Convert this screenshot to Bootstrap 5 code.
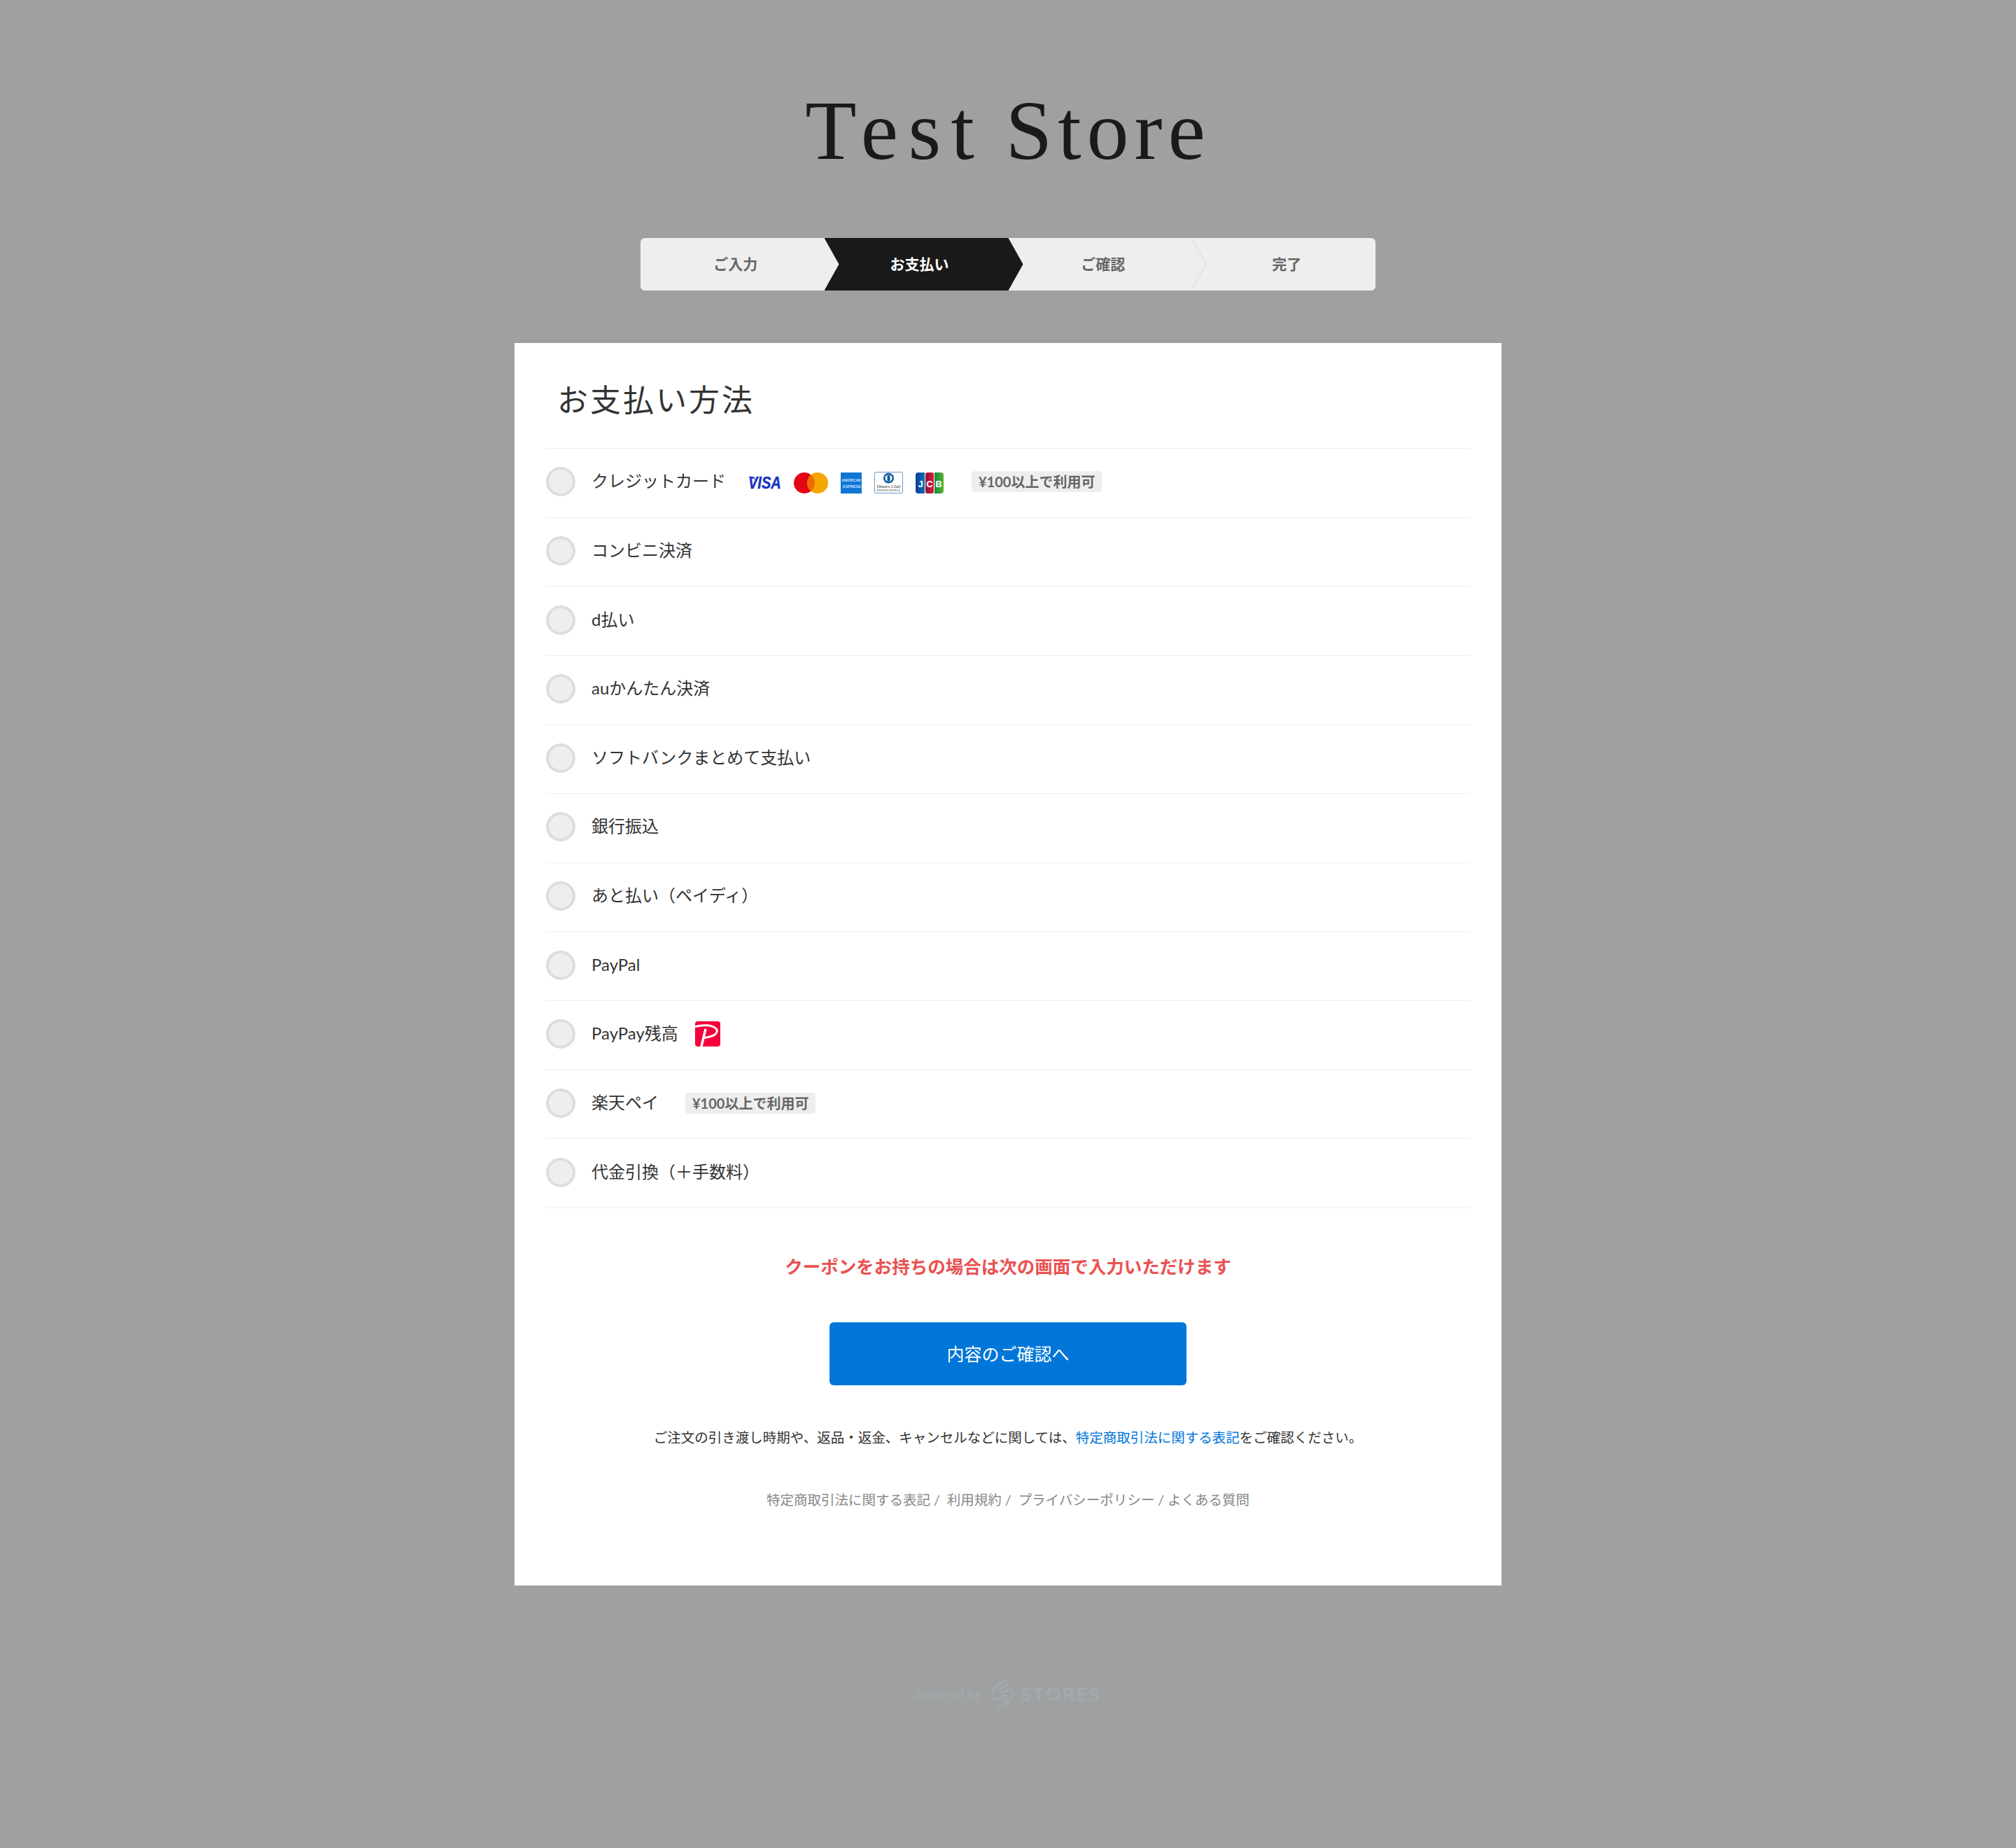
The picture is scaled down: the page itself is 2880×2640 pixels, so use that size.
<!DOCTYPE html>
<html lang="ja">
<head>
  <meta charset="UTF-8">
  <meta name="viewport" content="width=device-width, initial-scale=1.0">
  <title>Test Store</title>
  <link href="https://cdn.jsdelivr.net/npm/bootstrap@5.3.1/dist/css/bootstrap.min.css" rel="stylesheet">
  <style>
    body {
      background: #9fa1a0;
      font-family: Lato, "Noto Sans CJK JP", sans-serif;
      color: #333;
      min-height: 100vh;
    }
    .store-logo {
      font-family: "Liberation Serif", serif;
      font-size: 120px;
      line-height: 120px;
      letter-spacing: 8px;
      word-spacing: -8px;
      color: #1a1a1a;
      padding-top: 127px;
      height: 340px;
    }
    .logo-first { letter-spacing: 14.500px; }
    .step-bar {
      width: 1050px;
      height: 75px;
      background: #eee;
      border-radius: 6px;
      margin-bottom: 75px;
    }
    .step-item {
      width: 262.5px;
      flex: none;
      font-size: 21px;
      line-height: 30px;
      font-weight: 700;
      color: #666;
      padding: 0 0 2px 9px;
      position: relative;
    }
    .step-active {
      width: 284px;
      margin-right: -21.5px;
      padding-right: 21px;
      background: #191919;
      color: #fff;
      z-index: 1;
      clip-path: polygon(0 0, 263px 0, 100% 50%, 263px 100%, 0 100%, 21px 50%);
    }
    .step-sep {
      position: absolute;
      right: -21px;
      top: 0;
      width: 22px;
      height: 75px;
    }
    .pay-panel {
      width: 1410px;
      height: 1775px;
      background: #fff;
      padding: 0 45px;
    }
    .pay-title {
      font-size: 44px;
      line-height: 60px;
      letter-spacing: 3px;
      font-weight: 400;
      margin: 0;
      padding: 51px 0 39px 16px;
      color: #333;
      height: 150px;
    }
    .pay-list {
      --bs-list-group-border-color: #eee;
      --bs-list-group-border-radius: 0;
      border-top: 1px solid #eee;
    }
    .pay-row {
      height: 98.64px;
      padding: 0 0 3px;
      border-bottom: 1px solid #eee !important;
      font-size: 24px;
      line-height: 36px;
      color: #333;
    }
    .pay-radio.form-check-input {
      width: 42px;
      height: 42px;
      margin: 0 23px 0 0;
      background-color: #eee;
      border: 4px solid #ddd;
      flex: none;
    }
    .pay-name { position: relative; top: -1px; }
    .min-badge {
      background: #eee;
      color: #666;
      font-size: 20px;
      font-weight: 700;
      line-height: 30px;
      height: 30px;
      padding: 0 10px;
      border-radius: 4px;
    }
    .min-badge-near { margin-left: 38px; }
    .card-logos { margin-left: 32px; margin-right: 40px; gap: 18px; padding-top: 3px; }
    .card-logos svg { display: block; }
    .coupon-note {
      font-size: 25.5px;
      line-height: 36px;
      font-weight: 700;
      color: #e95252;
      margin: 65px 0 62px;
    }
    .next-btn {
      width: 510px;
      height: 90px;
      background: #0076d9;
      border: 0;
      border-radius: 6px;
      color: #fff;
      font-size: 25px;
      line-height: 88px;
      padding: 0;
    }
    .next-btn:hover { background: #0076d9; color: #fff; }
    .legal-note {
      font-size: 19.5px;
      line-height: 30px;
      color: #333;
      margin: 60px 0 59px;
    }
    .legal-note a { color: #0076d9; text-decoration: none; }
    .foot-links {
      font-size: 19.5px;
      line-height: 30px;
      color: #888;
    }
    .foot-links a { color: #888; text-decoration: none; }
    .powered-by {
      color: #a3a8b0;
      margin-top: 131px;
      height: 48px;
    }
    .powered-by small {
      font-size: 17px;
      letter-spacing: .6px;
      font-weight: 700;
      margin-right: 13px;
    }
    .stores-word {
      font-family: Lato, sans-serif;
      font-size: 27px;
      font-weight: 900;
      letter-spacing: 2.300px;
      margin-left: 9px;
    }
  </style>
</head>
<body>
  <div class="d-flex flex-column align-items-center">
    <div class="store-logo text-center"><span class="logo-first">Test</span> Store</div>

    <div class="step-bar d-flex">
      <div class="step-item d-flex align-items-center justify-content-center">ご入力</div>
      <div class="step-item step-active d-flex align-items-center justify-content-center">お支払い</div>
      <div class="step-item d-flex align-items-center justify-content-center">ご確認
        <svg class="step-sep" viewBox="0 0 22 75"><path d="M0 0 L21 37.5 L0 75" fill="none" stroke="#d8d8d8" stroke-width="1"/></svg>
      </div>
      <div class="step-item d-flex align-items-center justify-content-center">完了</div>
    </div>

    <div class="pay-panel">
      <h2 class="pay-title">お支払い方法</h2>
      <div class="list-group list-group-flush pay-list">
        <label class="list-group-item d-flex align-items-center pay-row">
          <input class="form-check-input pay-radio" type="radio" name="pay">
          <span class="pay-name">クレジットカード</span>
          <span class="d-flex align-items-center card-logos">
            <svg width="47" height="30" viewBox="0 0 47 30"><path d="M0 6h8l2 4z" fill="#1a34c4"/><text x="0" y="19.500" transform="scale(1 1.2)" font-family="Liberation Sans" font-size="20" font-weight="700" font-style="italic" fill="#1a34c4" stroke="#1a34c4" stroke-width=".4">VISA</text></svg>
            <svg width="49" height="30" viewBox="0 0 49 30"><circle cx="15" cy="15" r="15" fill="#e30613"/><circle cx="34" cy="15" r="15" fill="#f5a500"/><path d="M24.500 3.400a15 15 0 0 1 0 23.200a15 15 0 0 1 0-23.200z" fill="#ee6a00"/></svg>
            <svg width="30" height="30" viewBox="0 0 30 30"><rect width="30" height="30" fill="#0f76d6"/><text x="15" y="13" text-anchor="middle" font-family="Liberation Sans" font-size="5" font-weight="700" fill="#cfe4fa" textLength="27" lengthAdjust="spacingAndGlyphs">AMERICAN</text><text x="16" y="22" text-anchor="middle" font-family="Liberation Sans" font-size="5" font-weight="700" fill="#cfe4fa" textLength="26" lengthAdjust="spacingAndGlyphs">EXPRESS</text></svg>
            <svg width="41" height="31" viewBox="0 0 41 31"><rect x=".5" y=".5" width="40" height="30" rx="1.500" fill="#fff" stroke="#6f9bc9"/><circle cx="20.500" cy="9" r="7.500" fill="#0a5a9c"/><circle cx="20.500" cy="9" r="5" fill="#fff"/><rect x="18.500" y="4.500" width="4" height="9" fill="#0a5a9c"/><text x="20.500" y="23" text-anchor="middle" font-family="Liberation Serif" font-size="7" fill="#333" textLength="34" lengthAdjust="spacingAndGlyphs">Diners Club</text><text x="20.500" y="28" text-anchor="middle" font-family="Liberation Serif" font-size="4" fill="#333" textLength="34" lengthAdjust="spacingAndGlyphs">INTERNATIONAL</text></svg>
            <svg width="40" height="32" viewBox="0 0 40 32">
              <defs>
                <linearGradient id="jcbBlue" x1="0" x2="1" y1="0" y2="0"><stop offset="0" stop-color="#0a3f8f"/><stop offset="1" stop-color="#0a6fc0"/></linearGradient>
                <linearGradient id="jcbRed" x1="0" x2="1" y1="0" y2="0"><stop offset="0" stop-color="#8f1230"/><stop offset="1" stop-color="#e01b3c"/></linearGradient>
                <linearGradient id="jcbGreen" x1="0" x2="1" y1="0" y2="0"><stop offset="0" stop-color="#0f8a3d"/><stop offset="1" stop-color="#5cb531"/></linearGradient>
              </defs>
              <path d="M4 1h9v30H4a4 4 0 0 1-4-4V5a4 4 0 0 1 4-4z" fill="url(#jcbBlue)"/>
              <rect x="14" y="1" width="12" height="30" rx="3" fill="url(#jcbRed)"/>
              <path d="M27 1h9a4 4 0 0 1 4 4v22a4 4 0 0 1-4 4h-9z" fill="url(#jcbGreen)"/>
              <text x="7" y="22" text-anchor="middle" font-family="Liberation Sans" font-size="13" font-weight="700" fill="#fff">J</text>
              <text x="20" y="22" text-anchor="middle" font-family="Liberation Sans" font-size="13" font-weight="700" fill="#fff">C</text>
              <text x="33" y="22" text-anchor="middle" font-family="Liberation Sans" font-size="13" font-weight="700" fill="#fff">B</text>
            </svg>
          </span>
          <span class="min-badge">¥100以上で利用可</span>
        </label>
        <label class="list-group-item d-flex align-items-center pay-row">
          <input class="form-check-input pay-radio" type="radio" name="pay"><span class="pay-name">コンビニ決済</span>
        </label>
        <label class="list-group-item d-flex align-items-center pay-row">
          <input class="form-check-input pay-radio" type="radio" name="pay"><span class="pay-name">d払い</span>
        </label>
        <label class="list-group-item d-flex align-items-center pay-row">
          <input class="form-check-input pay-radio" type="radio" name="pay"><span class="pay-name">auかんたん決済</span>
        </label>
        <label class="list-group-item d-flex align-items-center pay-row">
          <input class="form-check-input pay-radio" type="radio" name="pay"><span class="pay-name">ソフトバンクまとめて支払い</span>
        </label>
        <label class="list-group-item d-flex align-items-center pay-row">
          <input class="form-check-input pay-radio" type="radio" name="pay"><span class="pay-name">銀行振込</span>
        </label>
        <label class="list-group-item d-flex align-items-center pay-row">
          <input class="form-check-input pay-radio" type="radio" name="pay"><span class="pay-name">あと払い（ペイディ）</span>
        </label>
        <label class="list-group-item d-flex align-items-center pay-row">
          <input class="form-check-input pay-radio" type="radio" name="pay"><span class="pay-name">PayPal</span>
        </label>
        <label class="list-group-item d-flex align-items-center pay-row">
          <input class="form-check-input pay-radio" type="radio" name="pay"><span class="pay-name">PayPay残高</span>
          <svg class="ms-4" width="36" height="36" viewBox="0 0 36 36"><rect width="36" height="36" rx="4" fill="#f5003c"/><path d="M0 7.500C12 4.500 25 5 30 10.500C35 17 25 23 11 23.500" fill="none" stroke="#fff" stroke-width="3"/><path d="M15 11L9 36" fill="none" stroke="#fff" stroke-width="3.500"/></svg>
        </label>
        <label class="list-group-item d-flex align-items-center pay-row">
          <input class="form-check-input pay-radio" type="radio" name="pay"><span class="pay-name">楽天ペイ</span>
          <span class="min-badge min-badge-near">¥100以上で利用可</span>
        </label>
        <label class="list-group-item d-flex align-items-center pay-row">
          <input class="form-check-input pay-radio" type="radio" name="pay"><span class="pay-name">代金引換（＋手数料）</span>
        </label>
      </div>

      <p class="coupon-note text-center">クーポンをお持ちの場合は次の画面で入力いただけます</p>
      <div class="text-center">
        <button type="button" class="btn next-btn">内容のご確認へ</button>
      </div>
      <p class="legal-note text-center">ご注文の引き渡し時期や、返品・返金、キャンセルなどに関しては、<a href="#">特定商取引法に関する表記</a>をご確認ください。</p>
      <div class="foot-links text-center">
        <a href="#">特定商取引法に関する表記</a> / &nbsp;<a href="#">利用規約</a> / &nbsp;<a href="#">プライバシーポリシー</a> / <a href="#">よくある質問</a>
      </div>
    </div>

    <div class="powered-by d-flex align-items-center">
      <small>powered by</small>
      <svg width="34" height="46" viewBox="0 0 36 46" fill="none" stroke="#a3a8b0" stroke-width="3"><path d="M24 2C12 6 2 16 2 25c0 6 5 8 10 6"/><path d="M24 2c3 3 3 8-3 10-4 1-8 4-7 7 2 4 10-1 14-2 6-1 7 7 3 13-4 7-14 14-22 13"/><path d="M12 31c4-4 10-7 13-4s-2 7-6 8"/></svg>
      <span class="stores-word">STORES</span>
    </div>
  </div>
</body>
</html>
